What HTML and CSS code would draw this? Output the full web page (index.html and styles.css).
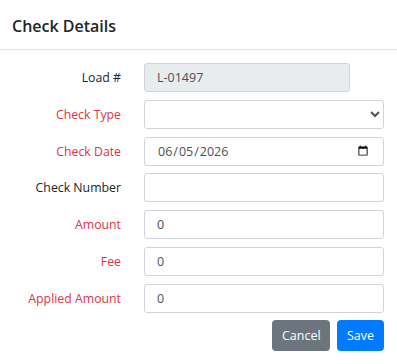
FILE: index.html
```html
<!DOCTYPE html>
<html lang="en">
<head>
    <meta charset="UTF-8">
    <title>Check Details</title>
    <link rel="stylesheet" href="styles.css">
</head>
<body>
    <div class="modal">
        <div class="modal-header">
            <h5>Check Details</h5>
        </div>
        <div class="modal-body">
            <div class="row">
                <label>Load #</label>
                <input class="field short" type="text" value="L-01497" readonly>
            </div>
            <div class="row">
                <label class="req">Check Type</label>
                <select class="field"><option></option></select>
            </div>
            <div class="row">
                <label class="req">Check Date</label>
                <input class="field" type="date" value="2026-06-05">
            </div>
            <div class="row">
                <label>Check Number</label>
                <input class="field" type="text">
            </div>
            <div class="row">
                <label class="req">Amount</label>
                <input class="field" type="text" value="0">
            </div>
            <div class="row">
                <label class="req">Fee</label>
                <input class="field" type="text" value="0">
            </div>
            <div class="row">
                <label class="req">Applied Amount</label>
                <input class="field" type="text" value="0">
            </div>
        </div>
        <div class="modal-footer">
            <button class="btn btn-cancel">Cancel</button>
            <button class="btn btn-save">Save</button>
        </div>
    </div>
</body>
</html>
```

FILE: styles.css
```css
body {
    margin: 0;
    background: #fff;
    font-family: 'Open Sans', 'Noto Sans', Arial, sans-serif;
    color: #212529;
}
.modal {
    width: 397px;
}
.modal-header {
    box-sizing: border-box;
    height: 50px;
    border-bottom: 1px solid #dee2e6;
    display: flex;
    align-items: center;
    padding: 2px 12px 0 12px;
}
.modal-header h5 {
    margin: 0;
    font-size: 16px;
    font-weight: 600;
    color: #212529;
}
.modal-body {
    padding: 13px 13px 0 0;
    display: flex;
    flex-direction: column;
    gap: 7.8px;
}
.row {
    display: grid;
    grid-template-columns: 121px 1fr;
    column-gap: 23px;
    align-items: center;
}
.row label {
    text-align: right;
    font-size: 12.3px;
    color: #212529;
}
.row label.req {
    color: #dc3545;
}
.field {
    box-sizing: border-box;
    height: 29px;
    width: 100%;
    border: 1px solid #ced4da;
    border-radius: 3px;
    padding: 0 12px;
    font-family: inherit;
    font-size: 12.5px;
    color: #495057;
    background: #fff;
    outline: none;
}
.field.short {
    width: 206px;
    background: #e9ecef;
}
select.field {
    padding: 0 8px;
}
.modal-footer {
    display: flex;
    justify-content: flex-end;
    gap: 7px;
    padding: 7px 13px 0 0;
}
.btn {
    height: 31px;
    border: none;
    border-radius: 4px;
    color: #fff;
    font-family: inherit;
    font-size: 12.5px;
    padding: 0 10px;
}
.btn-cancel {
    background: #6c757d;
    width: 58px;
}
.btn-save {
    background: #007bff;
    width: 47px;
}
```
